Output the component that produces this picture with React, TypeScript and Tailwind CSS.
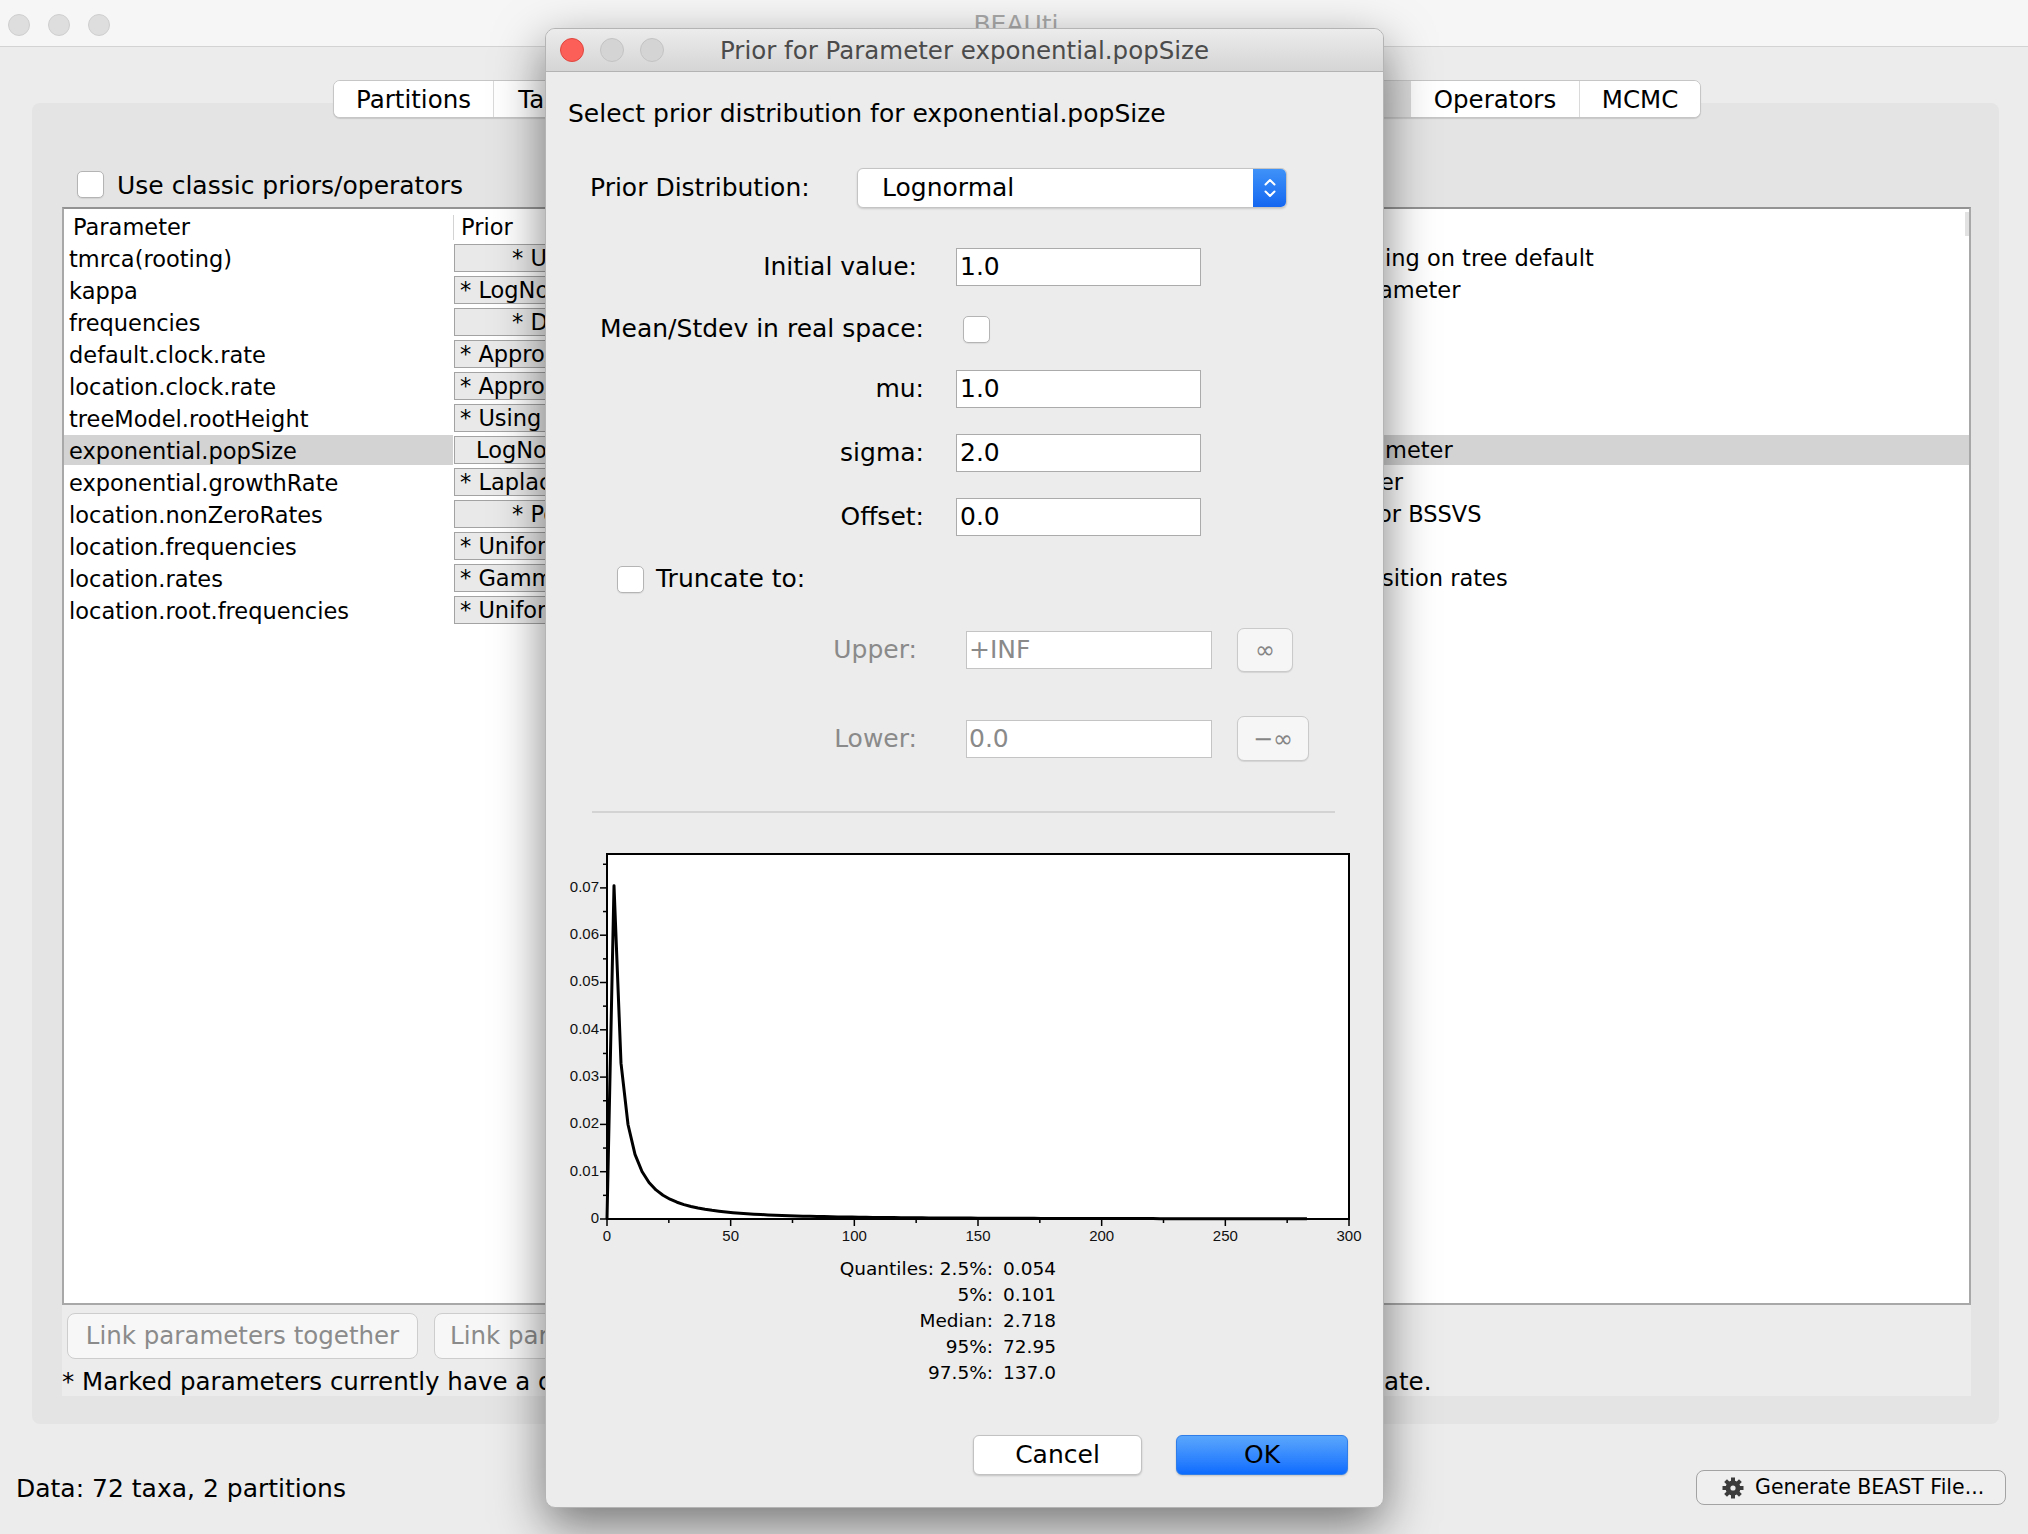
import React from "react";

type Row = {
  name: string;
  prior: string;
  indent: string;
  desc: string;
  tail?: string;
  cut: string;
  selected?: boolean;
};

const rows: Row[] = [
  { name: "tmrca(rooting)", prior: "* Using Tree Prior", indent: "pl-[57px]", desc: "tmrca of taxon set rooting, depend", tail: "ing on tree default", cut: "w-[332px]" },
  { name: "kappa", prior: "* LogNormal [1, 1.25], initial=2", indent: "pl-[5px]", desc: "HKY transition-transversion par", tail: "ameter", cut: "w-[326px]" },
  { name: "frequencies", prior: "* Dirichlet [1, 1]", indent: "pl-[57px]", desc: "base frequencies", cut: "w-[300px]" },
  { name: "default.clock.rate", prior: "* Approx. Reference Prior, initial=1", indent: "pl-[5px]", desc: "substitution rate", cut: "w-[300px]" },
  { name: "location.clock.rate", prior: "* Approx. Reference Prior, initial=1", indent: "pl-[5px]", desc: "location clock rate", cut: "w-[300px]" },
  { name: "treeModel.rootHeight", prior: "* Using Tree Prior in [0, ∞]", indent: "pl-[5px]", desc: "root height of tree", cut: "w-[300px]" },
  { name: "exponential.popSize", prior: "LogNormal [1, 2], initial=1", indent: "pl-[21px]", desc: "coalescent population size para", tail: "meter", cut: "w-[332px]", selected: true },
  { name: "exponential.growthRate", prior: "* Laplace [0, 1], initial=0", indent: "pl-[5px]", desc: "coalescent growth rate paramet", tail: "er", cut: "w-[327px]" },
  { name: "location.nonZeroRates", prior: "* Poisson [0.6931]", indent: "pl-[57px]", desc: "location non-zero rates f", tail: "or BSSVS", cut: "w-[325px]" },
  { name: "location.frequencies", prior: "* Uniform [0, 1]", indent: "pl-[5px]", desc: "location frequencies", cut: "w-[300px]" },
  { name: "location.rates", prior: "* Gamma [1, 1], initial=1", indent: "pl-[5px]", desc: "location relative rates of tran", tail: "sition rates", cut: "w-[329px]" },
  { name: "location.root.frequencies", prior: "* Uniform [0, 1]", indent: "pl-[5px]", desc: "root location frequencies", cut: "w-[300px]" },
];

const tabs: { label: string; w: string; selected?: boolean }[] = [
  { label: "Partitions", w: "w-[159px]" },
  { label: "Taxa", w: "w-[105px]" },
  { label: "Tips", w: "w-[95px]" },
  { label: "Traits", w: "w-[115px]" },
  { label: "Sites", w: "w-[105px]" },
  { label: "Clocks", w: "w-[125px]" },
  { label: "Trees", w: "w-[115px]" },
  { label: "States", w: "w-[125px]" },
  { label: "Priors", w: "w-[132px]", selected: true },
  { label: "Operators", w: "w-[169px]" },
  { label: "MCMC", w: "w-[121px]" },
];

const quantiles = [
  ["Quantiles: 2.5%:", "0.054"],
  ["5%:", "0.101"],
  ["Median:", "2.718"],
  ["95%:", "72.95"],
  ["97.5%:", "137.0"],
];

function Box() {
  return <div className="h-[27px] w-[27px] shrink-0 rounded-[5px] border border-[#b4b4b4] bg-white shadow-[0_1px_1px_rgba(0,0,0,0.08)]" />;
}

function Gear() {
  return (
    <svg width="24" height="24" viewBox="0 0 24 24">
      {[0, 45, 90, 135].map((a) => (
        <rect key={a} x="10" y="1.5" width="4" height="21" fill="#3c3c3c" transform={`rotate(${a} 12 12)`} />
      ))}
      <circle cx="12" cy="12" r="7.5" fill="#3c3c3c" />
      <circle cx="12" cy="12" r="2.6" fill="#ececec" />
    </svg>
  );
}

// lognormal(mu=1, sigma=2) sampled like the dialog does
const L = 61;
const B = 390;
const xs = 742 / 300;
const ys = 4730;
const curve = Array.from({ length: 101 }, (_, i) => {
  const x = i * 2.83;
  const y = x === 0 ? 0 : Math.exp(-Math.pow(Math.log(x) - 1, 2) / 8) / (x * 2 * Math.sqrt(2 * Math.PI));
  return `${(L + x * xs).toFixed(2)},${(B - y * ys).toFixed(2)}`;
}).join(" ");

function Chart() {
  const yMajor = [0, 0.01, 0.02, 0.03, 0.04, 0.05, 0.06, 0.07];
  const yMinor = [0.005, 0.015, 0.025, 0.035, 0.045, 0.055, 0.065, 0.075];
  const xMajor = [0, 50, 100, 150, 200, 250, 300];
  const xMinor = [25, 75, 125, 175, 225, 275];
  return (
    <svg width="839" height="420" className="shrink-0">
      <rect x={L} y="25" width="742" height="365" fill="white" stroke="black" strokeWidth="2" />
      {yMajor.map((v) => (
        <g key={v}>
          <line x1="54" x2={L} y1={B - v * ys} y2={B - v * ys} stroke="black" strokeWidth="1.5" />
          <text x="53" y={B - v * ys} textAnchor="end" dominantBaseline="middle" fontFamily="'Liberation Sans', Arial, sans-serif" fontSize="15" fill="#111">
            {v === 0 ? "0" : v.toFixed(2)}
          </text>
        </g>
      ))}
      {yMinor.map((v) => (
        <line key={v} x1="57" x2={L} y1={B - v * ys} y2={B - v * ys} stroke="black" strokeWidth="1.5" />
      ))}
      {xMajor.map((v) => (
        <g key={v}>
          <line x1={L + v * xs} x2={L + v * xs} y1={B} y2={B + 7} stroke="black" strokeWidth="1.5" />
          <text x={L + v * xs} y="408" textAnchor="middle" dominantBaseline="middle" fontFamily="'Liberation Sans', Arial, sans-serif" fontSize="15" fill="#111">
            {v}
          </text>
        </g>
      ))}
      {xMinor.map((v) => (
        <line key={v} x1={L + v * xs} x2={L + v * xs} y1={B} y2={B + 4} stroke="black" strokeWidth="1.5" />
      ))}
      <polyline points={curve} fill="none" stroke="black" strokeWidth="3" strokeLinejoin="round" />
    </svg>
  );
}

function Dialog() {
  const field = "h-[38px] w-[245px] border border-[#ababab] bg-white pl-[3px] text-[25px] leading-[36px]";
  return (
    <div className="absolute left-[545px] top-[28px] z-20 flex h-[1480px] w-[839px] flex-col overflow-hidden rounded-[10px] border border-[#b4b4b4] bg-[#ececec] shadow-[0_18px_50px_rgba(0,0,0,0.5)]">
      {/* title bar */}
      <div className="grid h-[43px] shrink-0 grid-cols-[1fr_auto_1fr] items-center border-b border-[#b3b3b3] bg-gradient-to-b from-[#ececec] to-[#d5d5d5]">
        <div className="flex gap-[16px] pl-[14px]">
          <span className="h-[24px] w-[24px] rounded-full border border-[#de463f] bg-[#fc5f57]" />
          <span className="h-[24px] w-[24px] rounded-full border border-[#c3c3c3] bg-[#d4d4d4]" />
          <span className="h-[24px] w-[24px] rounded-full border border-[#c3c3c3] bg-[#d4d4d4]" />
        </div>
        <div className="pt-[2px] text-[24.5px] text-[#4b4b4b]">Prior for Parameter exponential.popSize</div>
        <div />
      </div>

      <div className="mt-[27px] h-[30px] pl-[22px] text-[25px] leading-[30px]">Select prior distribution for exponential.popSize</div>

      <div className="mt-[39px] flex h-[40px] items-center pl-[44px]">
        <div className="w-[267px] text-[25px]">Prior Distribution:</div>
        <div className="flex h-[40px] w-[430px] overflow-hidden rounded-[6px] border border-[#c4c4c4] bg-white shadow-[0_1px_2px_rgba(0,0,0,0.15)]">
          <div className="flex flex-1 items-center pl-[24px] text-[25px]">Lognormal</div>
          <div className="flex w-[33px] flex-col items-center justify-center bg-gradient-to-b from-[#3f92f8] to-[#1466f0]">
            <svg width="14" height="24" viewBox="0 0 14 24">
              <path d="M2.5 8.5 L7 4 L11.5 8.5" fill="none" stroke="white" strokeWidth="2" strokeLinecap="round" strokeLinejoin="round" />
              <path d="M2.5 15.5 L7 20 L11.5 15.5" fill="none" stroke="white" strokeWidth="2" strokeLinecap="round" strokeLinejoin="round" />
            </svg>
          </div>
        </div>
      </div>

      <div className="mt-[40px] flex h-[38px] items-center">
        <div className="w-[378px] pr-[7px] text-right text-[25px]">Initial value:</div>
        <div className={`ml-[32px] ${field}`}>1.0</div>
      </div>
      <div className="mt-[24px] flex h-[38px] items-center">
        <div className="w-[378px] text-right text-[25px]">Mean/Stdev in real space:</div>
        <div className="ml-[39px]">
          <Box />
        </div>
      </div>
      <div className="mt-[22px] flex h-[38px] items-center">
        <div className="w-[378px] text-right text-[25px]">mu:</div>
        <div className={`ml-[32px] ${field}`}>1.0</div>
      </div>
      <div className="mt-[26px] flex h-[38px] items-center">
        <div className="w-[378px] text-right text-[25px]">sigma:</div>
        <div className={`ml-[32px] ${field}`}>2.0</div>
      </div>
      <div className="mt-[26px] flex h-[38px] items-center">
        <div className="w-[378px] text-right text-[25px]">Offset:</div>
        <div className={`ml-[32px] ${field}`}>0.0</div>
      </div>
      <div className="mt-[24px] flex h-[38px] items-center pl-[71px]">
        <Box />
        <div className="ml-[12px] text-[25px]">Truncate to:</div>
      </div>

      <div className="mt-[30px] flex h-[44px] items-center">
        <div className="w-[378px] pr-[7px] text-right text-[25px] text-[#8a8a8a]">Upper:</div>
        <div className="ml-[42px] h-[38px] w-[246px] border border-[#c4c4c4] bg-white pl-[2px] text-[25px] leading-[36px] text-[#8a8a8a]">+INF</div>
        <div className="ml-[25px] flex h-[44px] w-[56px] items-center justify-center rounded-[7px] border border-[#cacaca] bg-[#f6f6f6] text-[24px] text-[#858585] shadow-[0_1px_1px_rgba(0,0,0,0.1)]">∞</div>
      </div>
      <div className="mt-[44px] flex h-[45px] items-center">
        <div className="w-[378px] pr-[7px] text-right text-[25px] text-[#8a8a8a]">Lower:</div>
        <div className="ml-[42px] h-[38px] w-[246px] border border-[#c4c4c4] bg-white pl-[2px] text-[25px] leading-[36px] text-[#8a8a8a]">0.0</div>
        <div className="ml-[25px] flex h-[45px] w-[72px] items-center justify-center rounded-[7px] border border-[#cacaca] bg-[#f6f6f6] text-[24px] text-[#858585] shadow-[0_1px_1px_rgba(0,0,0,0.1)]">−∞</div>
      </div>

      <div className="ml-[46px] mt-[50px] h-[2px] w-[743px] bg-[#d3d3d3]" />

      <div className="mt-[16px]">
        <Chart />
      </div>

      <div className="mt-[7px] grid grid-cols-[447px_auto] gap-x-[10px] text-[18.5px] leading-[26px]">
        {quantiles.map(([k, v]) => (
          <React.Fragment key={k}>
            <div className="text-right">{k}</div>
            <div>{v}</div>
          </React.Fragment>
        ))}
      </div>

      <div className="mt-[49px] flex justify-end gap-[34px] pr-[35px]">
        <div className="flex h-[40px] w-[169px] items-center justify-center rounded-[6px] border border-[#c2c2c2] bg-white text-[25px] shadow-[0_1px_2px_rgba(0,0,0,0.18)]">Cancel</div>
        <div className="flex h-[40px] w-[172px] items-center justify-center rounded-[6px] border border-[#2f7de8] bg-gradient-to-b from-[#5aa6fc] to-[#0b6bfe] text-[25px] shadow-[0_1px_2px_rgba(0,0,0,0.18)]">OK</div>
      </div>
    </div>
  );
}

export default function App() {
  return (
    <div className="relative h-[1534px] w-[2028px] overflow-hidden bg-[#ececec] font-['DejaVu_Sans',sans-serif] text-black">
      {/* window title bar */}
      <div className="grid h-[47px] grid-cols-[1fr_auto_1fr] items-center border-b border-[#d3d3d3] bg-[#f6f6f6]">
        <div className="flex gap-[18px] pl-[8px] pt-[4px]">
          <span className="h-[22px] w-[22px] rounded-full border border-[#cfcfcf] bg-[#dedede]" />
          <span className="h-[22px] w-[22px] rounded-full border border-[#cfcfcf] bg-[#dedede]" />
          <span className="h-[22px] w-[22px] rounded-full border border-[#cfcfcf] bg-[#dedede]" />
        </div>
        <div className="pl-[4px] pt-[3px] text-[25px] text-[#a9a9a9]">BEAUti</div>
        <div />
      </div>

      {/* tabs */}
      <div className="relative z-10 mt-[33px] flex justify-center pl-[6px]">
        <div className="flex h-[38px] overflow-hidden rounded-[7px] border border-[#c6c6c6] bg-white shadow-[0_1px_1px_rgba(0,0,0,0.12)]">
          {tabs.map((t, i) => (
            <div
              key={t.label}
              className={`${t.w} flex items-center justify-center pt-[2px] text-[24.5px] ${i > 0 ? "border-l border-[#dadada]" : ""} ${t.selected ? "bg-[#dcdcdc]" : "bg-white"}`}
            >
              {t.label}
            </div>
          ))}
        </div>
      </div>

      {/* tab panel */}
      <div className="ml-[32px] mr-[29px] -mt-[15px] flex h-[1321px] flex-col rounded-[8px] bg-[#e4e4e4] px-[28px] pl-[30px]">
        <div className="mt-[68px] flex h-[27px] items-center pl-[15px]">
          <Box />
          <div className="ml-[13px] pt-[3px] text-[25px]">Use classic priors/operators</div>
        </div>

        <div className="mt-[9px] flex h-[1098px] flex-col overflow-hidden border-2 border-[#a8a8a8] border-t-[#939393] bg-white text-[22.5px]">
          <div className="flex h-[34px] shrink-0 items-center pt-[3px]">
            <div className="w-[389px] pl-[9px]">Parameter</div>
            <div className="h-[25px] w-px bg-[#d3d3d3]" />
            <div className="w-[599px] pl-[7px]">Prior</div>
            <div className="flex-1 pl-[7px]">Description</div>
            <div className="h-[24px] w-[4px] self-start bg-[#e2e2e2]" />
          </div>
          {rows.map((r) => (
            <div key={r.name} className="flex h-[32px] shrink-0">
              <div className={`h-[30px] w-[389px] pl-[5px] pt-[1px] leading-[30px] ${r.selected ? "bg-[#d3d3d3]" : ""}`}>{r.name}</div>
              <div className="w-[1px]" />
              <div className={`mt-[1px] h-[28px] w-[599px] overflow-hidden whitespace-nowrap border border-[#a3a3a3] bg-[#e9e9e9] leading-[27px] ${r.indent}`}>
                {r.prior}
              </div>
              <div className={`flex h-[30px] flex-1 items-center whitespace-nowrap pt-[1px] ${r.selected ? "bg-[#d3d3d3]" : ""}`}>
                <div className={`flex ${r.cut} shrink-0 justify-end overflow-hidden`}>
                  <span className="shrink-0">{r.desc}</span>
                </div>
                {r.tail && <span>{r.tail}</span>}
              </div>
            </div>
          ))}
        </div>

        <div className="flex flex-col bg-[#ececec]">
          <div className="mt-[8px] flex gap-[16px] pl-[5px]">
            <div className="flex h-[46px] w-[351px] items-center justify-center rounded-[8px] border border-[#cdcdcd] bg-[#f7f7f7] text-[24.5px] text-[#8b8b8b]">
              Link parameters together
            </div>
            <div className="flex h-[46px] w-[560px] items-center rounded-[8px] border border-[#cdcdcd] bg-[#f7f7f7] pl-[15px] text-[24.5px] text-[#8b8b8b]">
              Link parameters into a hierarchical model
            </div>
          </div>
          <div className="mt-[9px] flex h-[28px] items-center whitespace-nowrap pt-[1px] text-[24.5px]">
            <div className="w-[1322px] shrink-0 overflow-hidden">
              * Marked parameters currently have a default prior distribution. You should check that they are appropri
            </div>
            <span>ate.</span>
          </div>
        </div>
      </div>

      {/* status bar */}
      <div className="mt-[46px] flex h-[35px] items-center justify-between pl-[16px] pr-[22px]">
        <div className="pt-[3px] text-[25px]">Data: 72 taxa, 2 partitions</div>
        <div className="flex h-[35px] w-[310px] items-center rounded-[8px] border border-[#a3a3a3] bg-[#efefef] pl-[24px] text-[20.5px]">
          <Gear />
          <span className="ml-[10px]">Generate BEAST File...</span>
        </div>
      </div>

      <Dialog />
    </div>
  );
}
